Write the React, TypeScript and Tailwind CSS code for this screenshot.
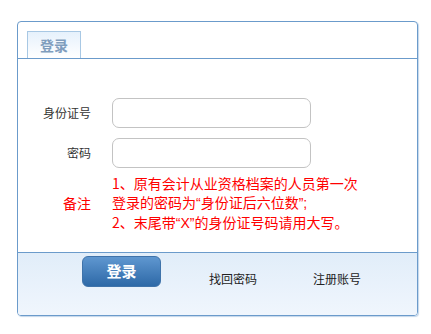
import React from 'react';

const font = "font-['Microsoft_YaHei','Noto_Sans_CJK_SC',sans-serif]";

const Q: React.FC<{ children: React.ReactNode }> = ({ children }) => (
  <span className="font-['Liberation_Sans',sans-serif]">{children}</span>
);

const Field: React.FC<{ label: string; type?: string }> = ({ label, type = 'text' }) => (
  <div className="flex items-center">
    <label className="w-[73px] text-right text-[12px] text-[#333]">{label}</label>
    <input
      type={type}
      className="ml-[21px] h-[30px] w-[199px] rounded-[7px] border border-[#c3c3c3] bg-white px-2 outline-none"
    />
  </div>
);

export default function App() {
  return (
    <div className={`${font} min-h-screen bg-white pl-[17px] pt-[21px]`}>
      <div className="w-[401px] h-[295px] flex flex-col rounded-[4px] border border-[#6b9bcb] overflow-hidden shadow-[1px_1px_1px_rgba(107,155,203,0.4)]">
        {/* tab header */}
        <div className="h-[37px] shrink-0 border-b border-[#6b9bcb] pl-[9px] pt-[9px] flex items-end">
          <div className="w-[54px] h-[27px] border border-b-0 border-[#a8c8e4] bg-gradient-to-b from-[#e6f1fc] to-white flex items-center justify-center text-[14px] font-bold text-[#7f9dbd]">
            登录
          </div>
        </div>

        {/* form */}
        <div className="flex-1 pt-[39px] border-b border-[#6b9bcb]">
          <Field label="身份证号" />
          <div className="mt-[10px]">
            <Field label="密码" type="password" />
          </div>
          <div className="mt-[6px] flex items-center text-[#ff0000] text-[14px] leading-[19px]">
            <div className="w-[73px] text-right">备注</div>
            <div className="ml-[21px]">
              <p>1、原有会计从业资格档案的人员第一次</p>
              <p>
                登录的密码为<Q>“</Q>身份证后六位数<Q>”;</Q>
              </p>
              <p>
                2、末尾带<Q>“X”</Q>的身份证号码请用大写。
              </p>
            </div>
          </div>
        </div>

        {/* footer */}
        <div className="h-[62px] shrink-0 bg-gradient-to-b from-[#e1edf9] to-[#f0f6fd] flex items-start pt-[3px]">
          <button className="ml-[64px] w-[79px] h-[31px] rounded-[6px] border border-[#3f73aa] bg-gradient-to-b from-[#5f97d0] to-[#2d69a7] text-white text-[15px] font-bold">
            登录
          </button>
          <a className="ml-[48px] mt-[14px] text-[12px] text-[#222] cursor-pointer">找回密码</a>
          <a className="ml-[56px] mt-[14px] text-[12px] text-[#222] cursor-pointer">注册账号</a>
        </div>
      </div>
    </div>
  );
}
